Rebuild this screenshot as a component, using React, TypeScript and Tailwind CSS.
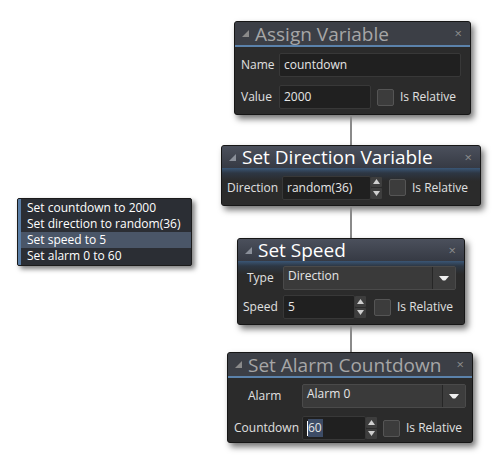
import React from "react";

const font = { fontFamily: '"Open Sans", "DejaVu Sans", sans-serif' };

function Corner({ light }: { light?: boolean }) {
  return (
    <svg width="7" height="7" viewBox="0 0 7 7" className="shrink-0">
      <polygon points="7,0 7,7 0,7" fill={light ? "#8a8f99" : "#8a8a8a"} />
    </svg>
  );
}

function Header({ title, active }: { title: string; active?: boolean }) {
  return (
    <div
      className={
        active
          ? "flex h-[22px] items-center gap-[6px] bg-[linear-gradient(to_bottom,#4b505c,#363a44)] pl-[7px] pr-[8px]"
          : "flex h-[25px] items-center gap-[6px] border-b-2 border-[#5b82ab] bg-[#3c3f46] pl-[7px] pr-[8px]"
      }
    >
      <Corner light={active} />
      <span
        className={
          "flex-1 whitespace-nowrap text-[19px] leading-[22px] " + (active ? "text-white" : "text-[#a6a6a6]")
        }
      >
        {title}
      </span>
      <span className="text-[13px] leading-none text-[#8d8d8d]">×</span>
    </div>
  );
}

function Field({ text, w, spinner, selected }: { text: string; w: string; spinner?: boolean; selected?: boolean }) {
  return (
    <div className={"flex h-[24px] items-stretch " + w}>
      <div className="flex flex-1 items-center rounded-[2px] border border-[#383838] bg-[#202020] pl-[4px] text-[12px] text-[#e6e6e6]">
        {selected ? (
          <>
            <span className="h-[15px] w-[1px] bg-white" />
            <span className="bg-[#3d4c66] pr-[1px]">60</span>
          </>
        ) : (
          text
        )}
      </div>
      {spinner && (
        <div className="flex w-[11px] flex-col gap-[1px] py-[1px]">
          <div className="flex flex-1 items-center justify-center rounded-[1px] bg-[#3e3e3e]">
            <svg width="7" height="5" viewBox="0 0 7 5"><polygon points="3.5,0 7,5 0,5" fill="#cfcfcf" /></svg>
          </div>
          <div className="flex flex-1 items-center justify-center rounded-[1px] bg-[#3e3e3e]">
            <svg width="7" height="5" viewBox="0 0 7 5"><polygon points="0,0 7,0 3.5,5" fill="#cfcfcf" /></svg>
          </div>
        </div>
      )}
    </div>
  );
}

function Relative() {
  return (
    <div className="flex items-center gap-[6px]">
      <div className="h-[17px] w-[17px] rounded-[2px] border border-[#555] bg-[#3c3c3c]" />
      <span className="text-[12px] text-[#e0e0e0]">Is Relative</span>
    </div>
  );
}

function Dropdown({ text, w }: { text: string; w: string }) {
  return (
    <div className={"flex h-[24px] rounded-[2px] border border-[#4a4a4a] bg-[#3a3a3a] " + w}>
      <div className="flex-1 pl-[4px] pt-[1px] text-[12px] leading-[16px] text-[#e6e6e6]">{text}</div>
      <div className="flex w-[23px] items-center justify-center border-l border-[#262626] bg-[#3d3d3d]">
        <svg width="10" height="5" viewBox="0 0 10 5">
          <path d="M0 0 H10 L6.5 4.2 Q5 5 3.5 4.2 Z" fill="#f0f0f0" />
        </svg>
      </div>
    </div>
  );
}

function Line({ h }: { h: string }) {
  return <div className={"w-[2px] bg-[#8a8a8a] self-center " + h} />;
}

const panel = "rounded-[3px] border border-[#161616] bg-[#2b2b2b] shadow-[3px_4px_6px_rgba(0,0,0,0.55)] overflow-hidden";
const glow = "bg-[linear-gradient(to_bottom,#3a5675_0px,#2d3744_5px,#2b2b2b_13px)]";

export default function App() {
  const rows = ["Set countdown to 2000", "Set direction to random(36)", "Set speed to 5", "Set alarm 0 to 60"];
  return (
    <div className="flex h-[463px] w-[503px] bg-white" style={font}>
      {/* action list */}
      <div className="pl-[17px] pt-[198px]">
        <div className="flex w-[175px] overflow-hidden rounded-[2px] border border-[#1b1b1b] bg-[#2b2e34] shadow-[3px_3px_5px_rgba(0,0,0,0.5)]">
          <div className="w-[3px] bg-[#5a7ea6]" />
          <div className="flex-1 py-[1px]">
            {rows.map((r, i) => (
              <div
                key={r}
                className={"h-[16px] pl-[6px] text-[12px] leading-[16px] text-white " + (i === 2 ? "bg-[#4a5668]" : "")}
              >
                {r}
              </div>
            ))}
          </div>
        </div>
      </div>

      {/* action chain */}
      <div className="ml-[29px] flex w-[260px] flex-col pt-[21px]">
        <div className={panel + " ml-[13px] w-[237px] h-[94px]"}>
          <Header title="Assign Variable" />
          <div className="flex flex-col gap-[8px] px-[6px] pt-[6px]">
            <div className="flex items-center">
              <span className="w-[38px] text-[12px] text-[#e0e0e0]">Name</span>
              <Field text="countdown" w="w-[182px]" />
            </div>
            <div className="flex items-center">
              <span className="w-[38px] text-[12px] text-[#e0e0e0]">Value</span>
              <Field text="2000" w="w-[92px]" />
              <div className="ml-[6px]"><Relative /></div>
            </div>
          </div>
        </div>
        <Line h="h-[30px]" />
        <div className={panel + " w-[260px] h-[61px]"}>
          <Header title="Set Direction Variable" active />
          <div className={glow + " flex h-[39px] items-center px-[5px]"}>
            <span className="w-[55px] text-[12px] text-[#e0e0e0]">Direction</span>
            <Field text="random(36)" w="w-[100px]" spinner />
            <div className="ml-[7px]"><Relative /></div>
          </div>
        </div>
        <Line h="h-[32px]" />
        <div className={panel + " ml-[16px] w-[228px] h-[87px]"}>
          <Header title="Set Speed" active />
          <div className={glow + " flex h-[65px] flex-col gap-[5px] px-[5px] pt-[5px]"}>
            <div className="flex items-center">
              <span className="w-[40px] pl-[4px] text-[12px] text-[#e0e0e0]">Type</span>
              <Dropdown text="Direction" w="w-[173px]" />
            </div>
            <div className="flex items-center">
              <span className="w-[40px] text-[12px] text-[#e0e0e0]">Speed</span>
              <Field text="5" w="w-[83px]" spinner />
              <div className="ml-[8px]"><Relative /></div>
            </div>
          </div>
        </div>
        <Line h="h-[27px]" />
        <div className={panel + " ml-[6px] w-[246px] h-[91px]"}>
          <Header title="Set Alarm Countdown" />
          <div className="flex flex-col gap-[8px] px-[6px] pt-[6px]">
            <div className="flex items-center">
              <span className="w-[68px] pl-[14px] text-[12px] text-[#e0e0e0]">Alarm</span>
              <Dropdown text="Alarm 0" w="w-[164px]" />
            </div>
            <div className="flex items-center">
              <span className="w-[68px] text-[12px] text-[#e0e0e0]">Countdown</span>
              <Field text="60" w="w-[75px]" spinner selected />
              <div className="ml-[6px]"><Relative /></div>
            </div>
          </div>
        </div>
      </div>
    </div>
  );
}
